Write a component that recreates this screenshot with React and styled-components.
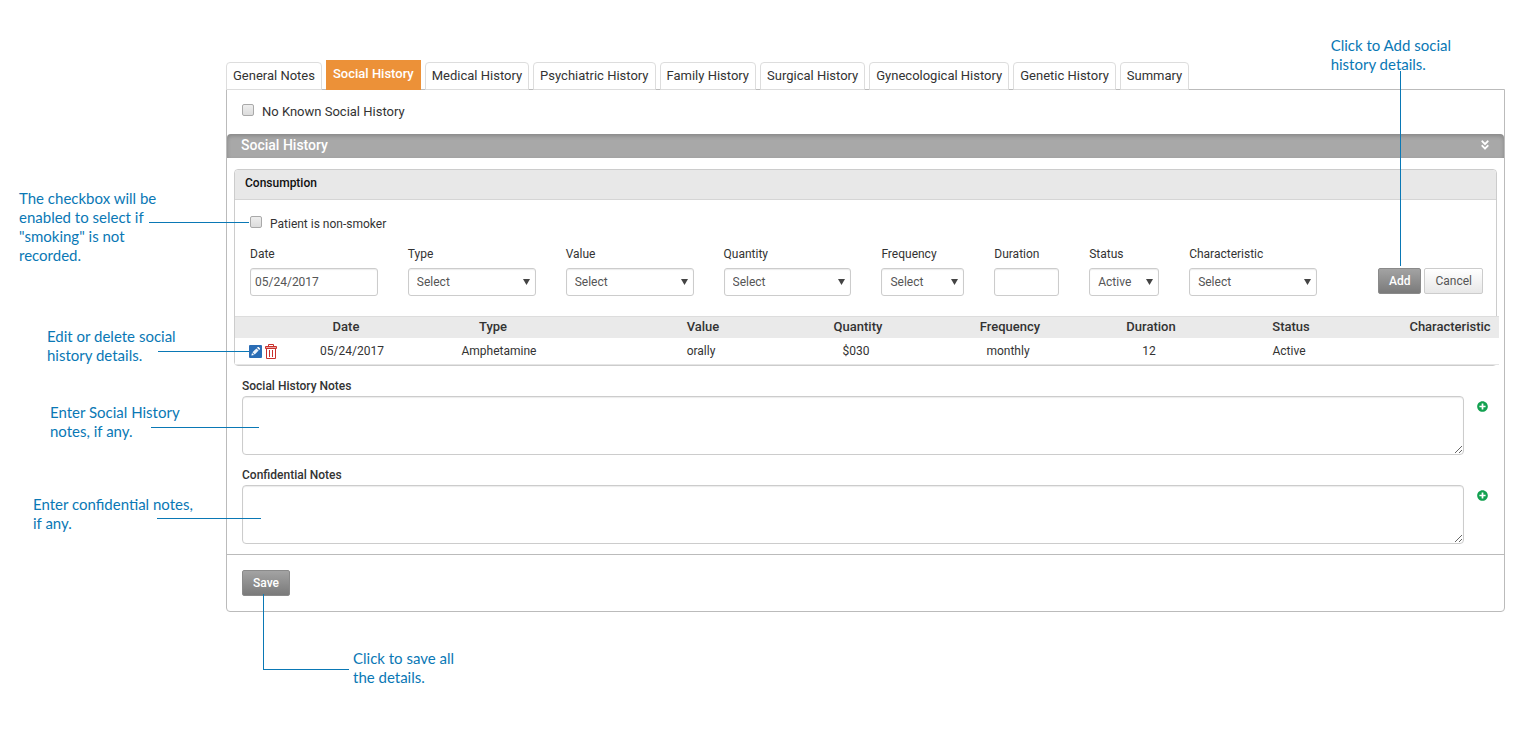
import React, { useState } from 'react'
import styled, { createGlobalStyle } from 'styled-components'
import { FaAngleDoubleDown, FaPlusCircle } from 'react-icons/fa'

const tabs = [
  'General Notes',
  'Social History',
  'Medical History',
  'Psychiatric History',
  'Family History',
  'Surgical History',
  'Gynecological History',
  'Genetic History',
  'Summary',
]

const fields = [
  { id: 'date', label: 'Date', value: '05/24/2017' },
  { id: 'type', label: 'Type', options: ['Select', 'Amphetamine'] },
  { id: 'value', label: 'Value', options: ['Select', 'orally'] },
  { id: 'quantity', label: 'Quantity', options: ['Select', '$030'] },
  { id: 'frequency', label: 'Frequency', options: ['Select', 'monthly'] },
  { id: 'duration', label: 'Duration', value: '' },
  { id: 'status', label: 'Status', options: ['Active', 'Inactive'] },
  { id: 'characteristic', label: 'Characteristic', options: ['Select'] },
]

const columns = [
  { label: '', width: 60 },
  { label: 'Date', width: 102 },
  { label: 'Type', width: 192 },
  { label: 'Value', width: 228 },
  { label: 'Quantity', width: 82 },
  { label: 'Frequency', width: 222 },
  { label: 'Duration', width: 60 },
  { label: 'Status', width: 220 },
  { label: 'Characteristic', width: 98 },
]

const rows = [
  ['05/24/2017', 'Amphetamine', 'orally', '$030', 'monthly', '12', 'Active', ''],
]

function EditIcon() {
  return (
    <svg width="13" height="13" viewBox="0 0 13 13" aria-hidden="true">
      <rect width="13" height="13" rx="1" fill="#2a6db5" />
      <path d="M2.4 10.6l.6-2.7 2.1 2.1z" fill="#fff" />
      <path d="M3.5 7.3l3.9-3.9 2.2 2.2-3.9 3.9z" fill="#eef3fa" />
      <path d="M8 2.8l.7-.7c.3-.3.7-.3 1 0l1.2 1.2c.3.3.3.7 0 1l-.7.7z" fill="#fff" />
    </svg>
  )
}

function TrashIcon() {
  return (
    <svg width="12" height="15" viewBox="0 0 12 15" fill="none" stroke="#c9302c" aria-hidden="true">
      <path d="M3.5 2V.5h5V2" />
      <path d="M.5 2.5h11v2H.5z" fill="#e9a5a3" />
      <path d="M1.5 4.5v10h9v-10M4.5 6v7M7.5 6v7" />
    </svg>
  )
}

export default function App() {
  const [active, setActive] = useState('Social History')

  return (
    <Page>
      <GlobalStyle />
      <Tabs role="tablist">
        {tabs.map((tab) => (
          <Tab key={tab} role="tab" aria-selected={tab === active} $active={tab === active} onClick={() => setActive(tab)}>
            {tab}
          </Tab>
        ))}
      </Tabs>

      <Panel>
        <TopRow>
          <CheckLabel>
            <Checkbox type="checkbox" />
            No Known Social History
          </CheckLabel>
        </TopRow>

        <SectionBar>
          Social History
          <IconButton aria-label="Collapse" $color="#fff">
            <FaAngleDoubleDown size={12} />
          </IconButton>
        </SectionBar>

        <Card>
          <CardTitle>Consumption</CardTitle>
          <CardBody>
            <CheckLabel $small>
              <Checkbox type="checkbox" />
              Patient is non-smoker
            </CheckLabel>
            <FieldGrid>
              {fields.map((field) => (
                <Field key={field.id}>
                  <label htmlFor={field.id}>{field.label}</label>
                  {field.options ? (
                    <SelectWrap>
                      <Select id={field.id}>
                        {field.options.map((option) => (
                          <option key={option}>{option}</option>
                        ))}
                      </Select>
                      <svg width="7" height="6" viewBox="0 0 7 6" aria-hidden="true">
                        <path d="M0 0h7L3.5 6z" fill="#444" />
                      </svg>
                    </SelectWrap>
                  ) : (
                    <Input id={field.id} type="text" defaultValue={field.value} />
                  )}
                </Field>
              ))}
              <Actions>
                <Button $primary>Add</Button>
                <Button>Cancel</Button>
              </Actions>
            </FieldGrid>
          </CardBody>

          <TableWrap>
            <Table>
              <colgroup>
                {columns.map((col) => (
                  <col key={col.label} width={col.width} />
                ))}
              </colgroup>
              <thead>
                <tr>
                  {columns.map((col) => (
                    <th key={col.label}>{col.label}</th>
                  ))}
                </tr>
              </thead>
              <tbody>
                {rows.map((row) => (
                  <tr key={row[0]}>
                    <td>
                      <RowActions>
                        <IconButton aria-label="Edit"><EditIcon /></IconButton>
                        <IconButton aria-label="Delete"><TrashIcon /></IconButton>
                      </RowActions>
                    </td>
                    {row.map((cell, i) => (
                      <td key={i}>{cell}</td>
                    ))}
                  </tr>
                ))}
              </tbody>
            </Table>
          </TableWrap>
        </Card>

        <Notes>
          {['Social History Notes', 'Confidential Notes'].map((title) => (
            <div key={title}>
              <NoteLabel htmlFor={title}>{title}</NoteLabel>
              <NoteRow>
                <TextArea id={title} />
                <IconButton aria-label={`Add ${title}`} $color="#12a150">
                  <FaPlusCircle size={11} />
                </IconButton>
              </NoteRow>
            </div>
          ))}
        </Notes>

        <Footer>
          <Button $primary>Save</Button>
        </Footer>
      </Panel>

      <Callout $top={189} $left={19}>The checkbox will be<br />enabled to select if<br />"smoking" is not<br />recorded.</Callout>
      <Line $top={222} $left={149} $width={100} />
      <Callout $top={327} $left={47}>Edit or delete social<br />history details.</Callout>
      <Line $top={351} $left={158} $width={91} />
      <Callout $top={403} $left={50}>Enter Social History<br />notes, if any.</Callout>
      <Line $top={427} $left={151} $width={108} />
      <Callout $top={495} $left={33}>Enter confidential notes,<br />if any.</Callout>
      <Line $top={518} $left={157} $width={104} />
      <Callout $top={649} $left={353}>Click to save all<br />the details.</Callout>
      <Line $top={594} $left={263} $width={86} $height={76} />
      <AddCallout>Click to Add social<br />history details.</AddCallout>
    </Page>
  )
}

const GlobalStyle = createGlobalStyle`
  * {
    box-sizing: border-box;
  }

  body {
    margin: 0;
    background: #fff;
    color: #333;
    font-family: Roboto, "Liberation Sans", sans-serif;
    font-size: 12px;
    line-height: 20px;
  }

  button, input, select, textarea {
    font-family: inherit;
    font-size: inherit;
  }
`

const Page = styled.div`
  position: relative;
  min-height: 100vh;
  padding: 60px 27px 40px 226px;
`

const Tabs = styled.div`
  display: flex;
  align-items: flex-end;
  gap: 4px;
`

const Tab = styled.button`
  position: relative;
  height: ${(p) => (p.$active ? 30 : 28)}px;
  margin-bottom: -1px;
  padding: 0 6px;
  padding-bottom: ${(p) => (p.$active ? 4 : 2)}px;
  border: 1px solid ${(p) => (p.$active ? '#ec9138' : '#ddd')};
  border-radius: ${(p) => (p.$active ? '0' : '4px 4px 0 0')};
  background: ${(p) => (p.$active ? '#ec9138' : '#fff')};
  color: ${(p) => (p.$active ? '#fff' : '#333')};
  font-size: 13px;
  font-weight: ${(p) => (p.$active ? 500 : 400)};
  white-space: nowrap;
  cursor: pointer;
`

const Panel = styled.div`
  border: 1px solid #bbb;
  border-radius: 0 0 4px 4px;
`

const TopRow = styled.div`
  padding: 12px 15px;
`

const CheckLabel = styled.label`
  display: flex;
  align-items: center;
  gap: 8px;
  font-size: ${(p) => (p.$small ? 12 : 13)}px;
`

const Checkbox = styled.input`
  appearance: none;
  width: 12px;
  height: 12px;
  margin: 0 0 4px;
  border: 1px solid #a9a9a9;
  border-radius: 2px;
  background: linear-gradient(#eee, #dcdcdc);

  &:checked {
    background: #2a6db5;
  }
`

const SectionBar = styled.div`
  display: flex;
  align-items: center;
  justify-content: space-between;
  height: 24px;
  padding: 0 13px 2px 14px;
  border-radius: 4px 4px 0 0;
  background: #a8a8a8;
  box-shadow: inset 0 2px 4px rgba(0, 0, 0, 0.2);
  color: #fff;
  font-size: 14px;
  font-weight: 500;
`

const IconButton = styled.button`
  display: flex;
  padding: 0;
  border: 0;
  background: none;
  color: ${(p) => p.$color || 'inherit'};
  cursor: pointer;
`

const Card = styled.section`
  margin: 11px 7px 0;
  border: 1px solid #ccc;
  border-radius: 4px;
`

const CardTitle = styled.h2`
  margin: 0;
  padding: 3px 10px 6px;
  border-bottom: 1px solid #d5d5d5;
  border-radius: 4px 4px 0 0;
  background: #e8e8e8;
  color: #111;
  font-size: 12px;
  font-weight: 500;
  line-height: 20px;
`

const CardBody = styled.div`
  padding: 14px 13px 20px 15px;
`

const FieldGrid = styled.div`
  display: grid;
  grid-template-columns: repeat(4, 128fr) 83fr 65fr 70fr 128fr auto;
  gap: 30px;
  align-items: end;
  margin-top: 10px;
`

const Field = styled.div`
  display: flex;
  flex-direction: column;
  gap: 4px;
  min-width: 0;
`

const Input = styled.input`
  width: 100%;
  height: 28px;
  padding: 0 4px;
  border: 1px solid #ccc;
  border-radius: 3px;
  background: #fff;
  box-shadow: inset 0 1px 1px rgba(0, 0, 0, 0.08);
  color: #555;
`

const SelectWrap = styled.div`
  position: relative;

  svg {
    position: absolute;
    top: 11px;
    right: 6px;
    pointer-events: none;
  }
`

const Select = styled(Input).attrs({ as: 'select' })`
  appearance: none;
  padding: 0 8px;
`

const Actions = styled.div`
  display: flex;
  gap: 3px;
  padding: 0 0 2px 31px;
`

const Button = styled.button`
  height: 26px;
  padding: 0 10px;
  border: 1px solid ${(p) => (p.$primary ? '#8a8a8a' : '#ccc')};
  border-radius: 2px;
  background: ${(p) => (p.$primary ? 'linear-gradient(#a3a3a3, #7a7a7a)' : 'linear-gradient(#fff, #e8e8e8)')};
  color: ${(p) => (p.$primary ? '#fff' : '#555')};
  font-weight: ${(p) => (p.$primary ? 500 : 400)};
  cursor: pointer;
`

const TableWrap = styled.div`
  position: relative;
  margin-right: -3px;
`

const Table = styled.table`
  width: 100%;
  table-layout: fixed;
  border-collapse: separate;
  border-spacing: 0;
  background: #fff;
  text-align: center;

  th {
    height: 22px;
    padding: 0 0 2px;
    border-top: 1px solid #ddd;
    background: #eaeaea;
    font-size: 13px;
    font-weight: 500;
    line-height: 19px;
  }

  td {
    height: 27px;
    padding: 0 4px 0 0;
    border-bottom: 1px solid #e5e5e5;
  }

  td:nth-child(2), td:nth-child(3) {
    padding-left: 16px;
  }
`

const RowActions = styled.div`
  display: flex;
  align-items: center;
  gap: 3px;
  padding-left: 14px;
`

const Notes = styled.div`
  display: grid;
  gap: 10px;
  padding: 10px 16px 10px 15px;
`

const NoteLabel = styled.label`
  display: block;
  font-weight: 500;
`

const NoteRow = styled.div`
  display: flex;
  align-items: flex-start;
  gap: 13px;

  button {
    margin-top: 5px;
  }
`

const TextArea = styled.textarea`
  flex: 1;
  height: 59px;
  border: 1px solid #ccc;
  border-radius: 4px;
  box-shadow: inset 0 1px 1px rgba(0, 0, 0, 0.08);
`

const Footer = styled.div`
  padding: 15px;
  border-top: 1px solid #bbb;
  display: flex;
`

// help notes that float over the form
const Callout = styled.p`
  position: absolute;
  top: ${(p) => p.$top}px;
  left: ${(p) => p.$left}px;
  margin: 0;
  color: #0a78b5;
  font-family: Lato, sans-serif;
  font-size: 15px;
  line-height: 19px;
  white-space: nowrap;
`

const Line = styled.span`
  position: absolute;
  top: ${(p) => p.$top}px;
  left: ${(p) => p.$left}px;
  width: ${(p) => p.$width}px;
  height: ${(p) => p.$height || 1}px;
  border-bottom: 1px solid #0a78b5;
  border-left: ${(p) => (p.$height ? '1px solid #0a78b5' : '0')};
  pointer-events: none;
`

const AddCallout = styled(Callout)`
  top: 36px;
  right: 81px;
  left: auto;

  &::after {
    content: "";
    position: absolute;
    top: 35px;
    left: 69px;
    width: 1px;
    height: 195px;
    background: #0a78b5;
  }
`
